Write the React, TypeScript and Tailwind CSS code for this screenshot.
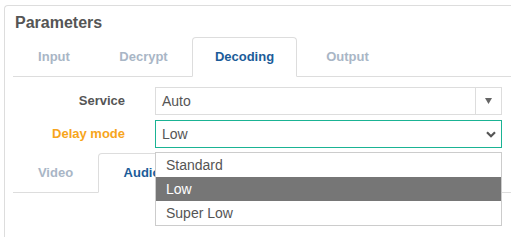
import React from "react";

const font = { fontFamily: '"Liberation Sans", Arial, sans-serif' };

function Tab({ label, active, w }: { label: string; active?: boolean; w: string }) {
  return (
    <div
      className={`${w} flex items-center justify-center text-[13px] font-bold -mb-px ${
        active
          ? "border border-[#ddd] border-b-white rounded-t-[4px] bg-white text-[#1b5c99]"
          : "border border-transparent text-[#a9b6c6]"
      }`}
    >
      {label}
    </div>
  );
}

export default function App() {
  return (
    <div className="w-[511px] h-[237px] overflow-hidden bg-white relative" style={font}>
      <div className="ml-[4px] mt-[5px] w-[540px] h-[260px] border-l border-t border-[#ddd] rounded-tl-[4px] pl-[8px]">
        <div className="pt-[7px] pl-[2px] h-[31px] text-[16px] leading-[20px] font-bold text-[#555]">Parameters</div>
        <div className="flex h-[40px] border-b border-[#ddd]">
          <Tab label="Input" w="w-[82px]" />
          <Tab label="Decrypt" w="w-[97px]" />
          <Tab label="Decoding" w="w-[105px]" active />
          <Tab label="Output" w="w-[101px]" />
        </div>
        <div className="pt-[10px] flex flex-col gap-[5px]">
          <div className="flex items-center">
            <div className="w-[112px] text-right text-[13px] font-bold text-[#555]">Service</div>
            <div className="ml-[30px] w-[347px] h-[28px] border border-[#ddd] flex items-center">
              <div className="flex-1 pl-[6px] text-[14px] text-[#555]">Auto</div>
              <div className="w-[26px] h-full border-l border-[#ddd] flex items-center justify-center">
                <svg width="7" height="6" viewBox="0 0 7 6">
                  <path d="M0 0 L7 0 L3.5 6 Z" fill="#666" />
                </svg>
              </div>
            </div>
          </div>
          <div className="flex items-center">
            <div className="w-[112px] text-right text-[13px] font-bold text-[#f7a51c]">Delay mode</div>
            <div className="ml-[30px] w-[347px] h-[28px] border border-[#1ab394] flex items-center">
              <div className="flex-1 pl-[6px] text-[14px] text-[#555]">Low</div>
              <div className="pr-[5px] flex items-center">
                <svg width="10" height="7" viewBox="0 0 10 7">
                  <path d="M1 1.2 L5 5.2 L9 1.2" fill="none" stroke="#555" strokeWidth="2.2" />
                </svg>
              </div>
            </div>
          </div>
        </div>
        <div className="mt-[5px] flex h-[40px] border-b border-[#ddd]">
          <Tab label="Video" w="w-[85px]" />
          <Tab label="Audio" w="w-[88px]" active />
        </div>
      </div>
      <div className="absolute left-[155px] top-[152px] w-[347px] border border-[#ccc] bg-white text-[14px] text-[#555]">
        <div className="h-[24px] pl-[10px] flex items-center">Standard</div>
        <div className="h-[24px] pl-[10px] flex items-center bg-[#767676] text-white">Low</div>
        <div className="h-[24px] pl-[10px] flex items-center">Super Low</div>
      </div>
    </div>
  );
}
